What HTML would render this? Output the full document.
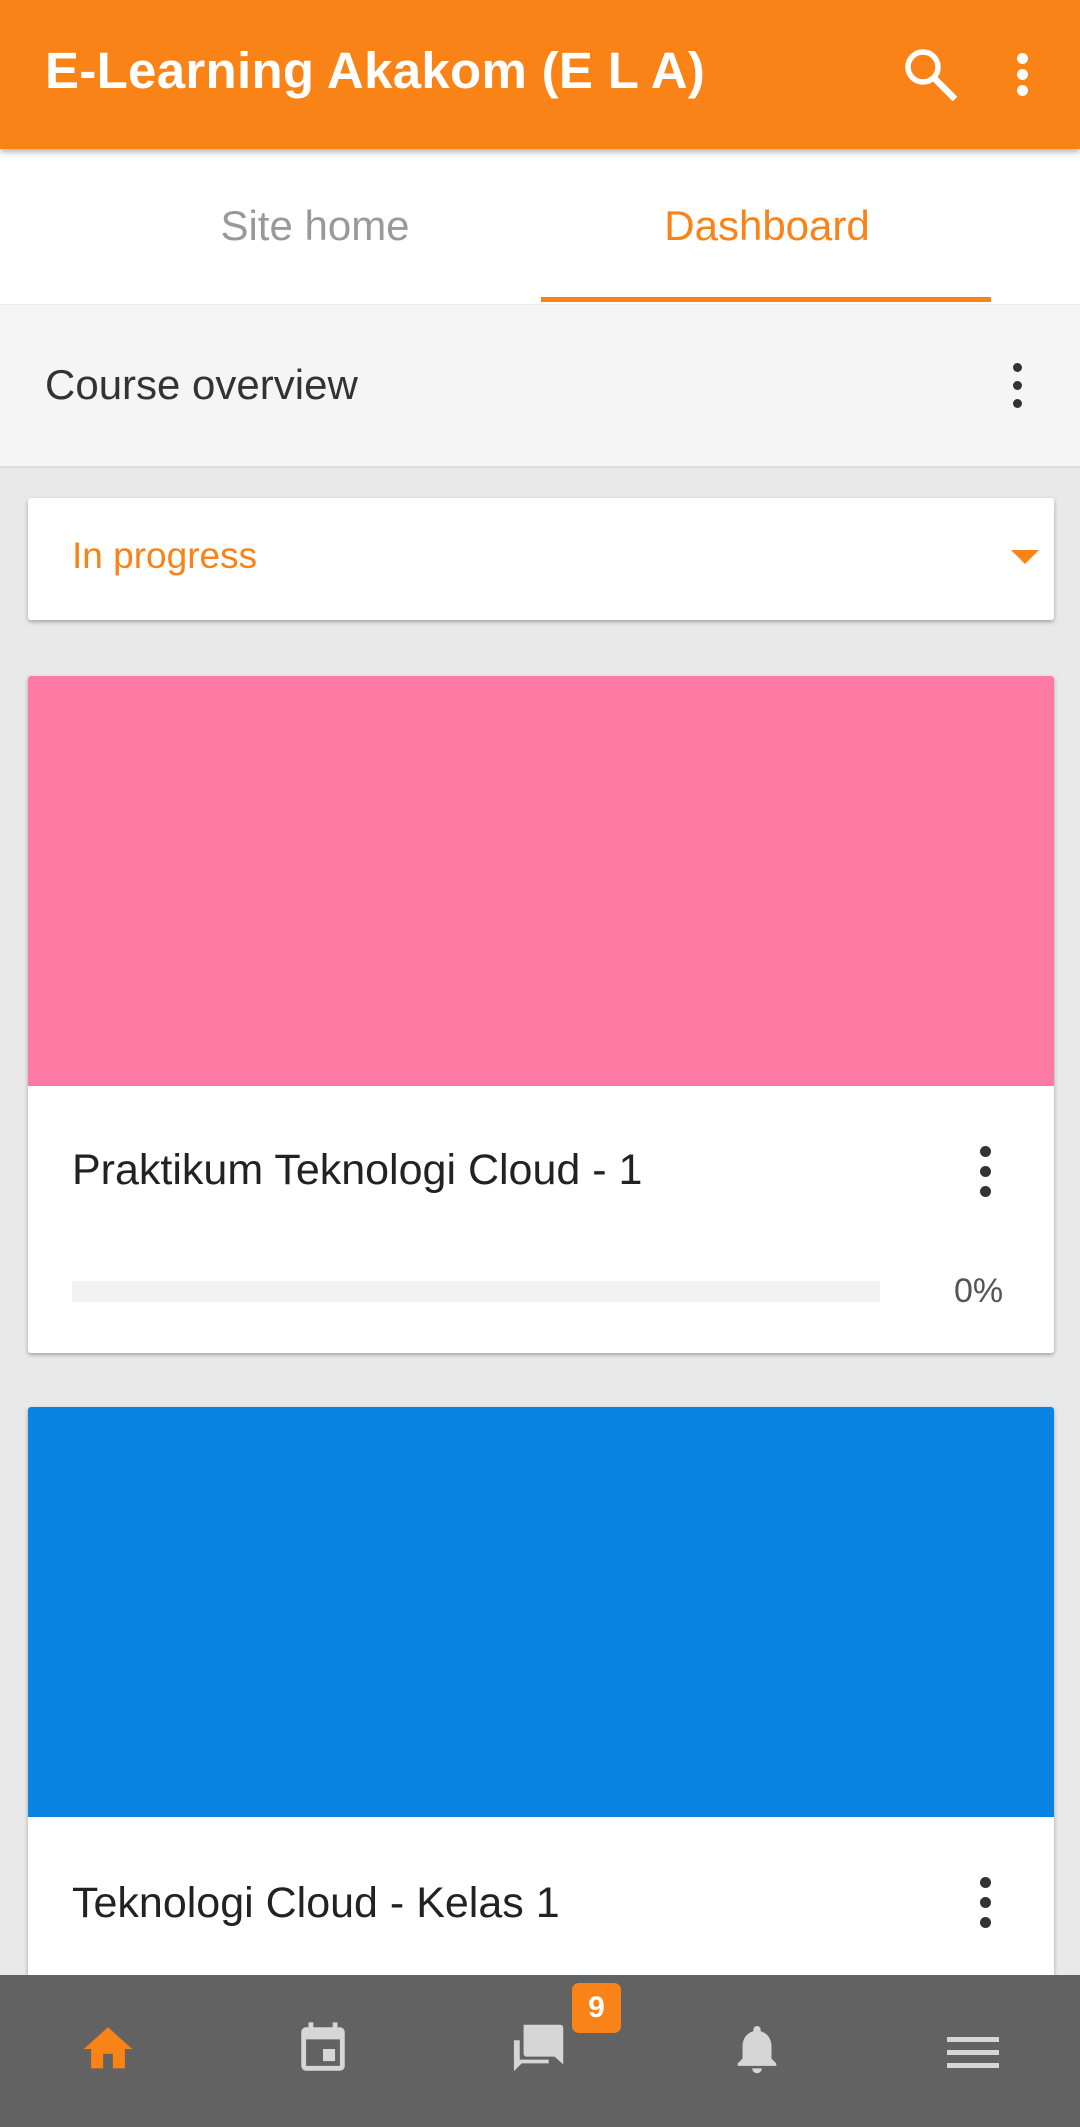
<!DOCTYPE html>
<html><head><meta charset="utf-8"><style>
*{margin:0;padding:0;box-sizing:border-box}
body{width:1080px;height:2127px;background:#e9e9e9;font-family:"Liberation Sans",sans-serif;position:relative;overflow:hidden}
.abs{position:absolute}
.hdr{left:0;top:0;width:1080px;height:149px;background:#f98316;box-shadow:0 3px 6px rgba(0,0,0,.3);z-index:2}
.tabs{left:0;top:149px;width:1080px;height:155px;background:#fff}
.card{background:#fff;box-shadow:0 2px 4px rgba(0,0,0,.3);border-radius:3px;overflow:hidden}
.dots span{display:block;width:9px;height:9px;border-radius:50%;background:#333;margin:0 0 9px}
</style></head><body>
<div class="abs hdr">
 <div class="abs" style="left:45px;top:41px;color:#fff;font-size:51px;font-weight:bold;letter-spacing:0.3px">E-Learning Akakom (E L A)</div>
 <svg class="abs" style="left:902px;top:46px" width="58" height="58" viewBox="0 0 58 58"><circle cx="21" cy="21" r="15" fill="none" stroke="#fff" stroke-width="5.5"/><path d="M32 32L53 53" stroke="#fff" stroke-width="6.5"/></svg>
 <div class="abs" style="left:1017px;top:53px">
  <div style="width:11px;height:11px;border-radius:50%;background:#fff;margin-bottom:5px"></div>
  <div style="width:11px;height:11px;border-radius:50%;background:#fff;margin-bottom:5px"></div>
  <div style="width:11px;height:11px;border-radius:50%;background:#fff"></div>
 </div>
</div>
<div class="abs tabs">
 <div class="abs" style="left:115px;width:400px;top:53px;text-align:center;font-size:42px;color:#999">Site home</div>
 <div class="abs" style="left:567px;width:400px;top:53px;text-align:center;font-size:42px;color:#f98316">Dashboard</div>
 <div class="abs" style="left:541px;top:148px;width:450px;height:5px;background:#f98316"></div>
</div>
<div class="abs" style="left:0;top:305px;width:1080px;height:163px;background:#f5f5f5;border-bottom:2px solid #ddd">
 <div class="abs" style="left:45px;top:56px;font-size:42px;color:#333">Course overview</div>
 <div class="abs dots" style="left:1013px;top:58px"><span></span><span></span><span></span></div>
</div>
<div class="abs card" style="left:28px;top:498px;width:1026px;height:122px">
 <div class="abs" style="left:44px;top:37px;font-size:37px;color:#f98316">In progress</div>
 <div class="abs" style="left:983px;top:52px;width:0;height:0;border-left:14px solid transparent;border-right:14px solid transparent;border-top:14px solid #f98316"></div>
</div>
<div class="abs card" style="left:28px;top:676px;width:1026px;height:677px">
 <div style="height:410px;background:#fe7aa5"></div>
 <div class="abs" style="left:44px;top:470px;font-size:43px;color:#222">Praktikum Teknologi Cloud - 1</div>
 <div class="abs dots" style="left:952px;top:470px"><span style="width:11px;height:11px"></span><span style="width:11px;height:11px"></span><span style="width:11px;height:11px"></span></div>
 <div class="abs" style="left:44px;top:605px;width:808px;height:21px;background:#f2f2f2"></div>
 <div class="abs" style="left:926px;top:596px;font-size:34px;color:#555">0%</div>
</div>
<div class="abs card" style="left:28px;top:1407px;width:1026px;height:700px">
 <div style="height:410px;background:#0a84e2"></div>
 <div class="abs" style="left:44px;top:472px;font-size:43px;color:#222">Teknologi Cloud - Kelas 1</div>
 <div class="abs dots" style="left:952px;top:470px"><span style="width:11px;height:11px"></span><span style="width:11px;height:11px"></span><span style="width:11px;height:11px"></span></div>
</div>
<div class="abs" style="left:0;top:1975px;width:1080px;height:152px;background:#626262">
 <svg class="abs" style="left:79px;top:45px" width="58" height="58" viewBox="0 0 24 24"><path fill="#f98316" d="M10 20v-6h4v6h5v-8h3L12 3 2 12h3v8z"/></svg>
 <svg class="abs" style="left:294px;top:45px" width="58" height="58" viewBox="0 0 24 24"><path fill="#d6d6d6" d="M17 12h-5v5h5v-5zM16 1v2H8V1H6v2H5c-1.11 0-2 .9-2 2v14a2 2 0 0 0 2 2h14c1.1 0 2-.9 2-2V5c0-1.1-.9-2-2-2h-1V1h-2zm3 18H5V8h14v11z"/></svg>
 <svg class="abs" style="left:512px;top:47px" width="58" height="50" viewBox="0 0 60 50"><path fill="#d6d6d6" d="M12 2h38a3 3 0 0 1 3 3v38l-9-8H15a3 3 0 0 1-3-3z"/><path fill="#d6d6d6" d="M2 18h6v20h30v4H10l-8 8z"/></svg>
 <div class="abs" style="left:572px;top:8px;width:49px;height:50px;background:#f98316;border-radius:7px;color:#fff;font-weight:bold;font-size:30px;text-align:center;line-height:50px">9</div>
 <svg class="abs" style="left:728px;top:45px" width="58" height="58" viewBox="0 0 24 24"><path fill="#d6d6d6" d="M12 22c1.1 0 2-.9 2-2h-4a2 2 0 0 0 2 2zm6-6v-5c0-3.07-1.64-5.64-4.5-6.32V4c0-.83-.67-1.5-1.5-1.5s-1.5.67-1.5 1.5v.68C7.63 5.36 6 7.92 6 11v5l-2 2v1h16v-1l-2-2z"/></svg>
 <div class="abs" style="left:947px;top:62px;width:52px"><div style="height:5px;background:#d6d6d6;margin-bottom:8px"></div><div style="height:5px;background:#d6d6d6;margin-bottom:8px"></div><div style="height:5px;background:#d6d6d6"></div></div>
</div>
</body></html>
